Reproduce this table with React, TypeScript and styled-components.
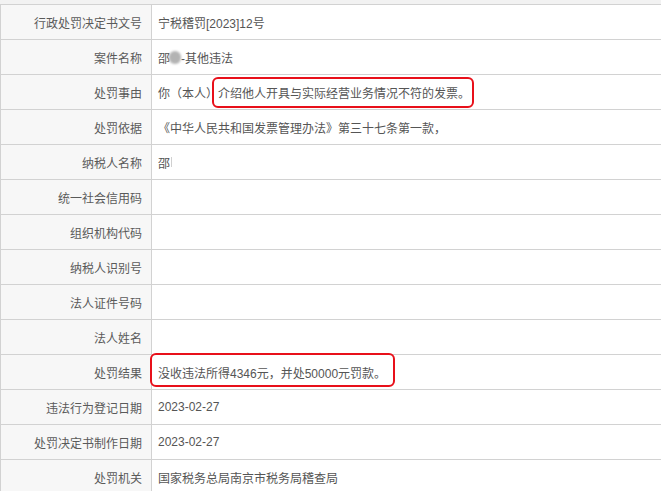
import React from "react";
import styled, { createGlobalStyle } from "styled-components";

const GlobalStyle = createGlobalStyle`
  html, body {
    margin: 0;
    padding: 0;
    background: #f2f2f2;
    overflow: hidden;
  }
  body {
    font-family: "Liberation Sans", "Noto Sans CJK SC", sans-serif;
  }
`;

const Page = styled.div`
  padding-top: 4px;
`;

const Table = styled.div`
  display: grid;
  grid-template-columns: 151px 1fr;
  grid-auto-rows: 35px;
  border-top: 1px solid #d2d2d2;
  border-left: 1px solid #d2d2d2;
  background: #ffffff;
`;

const Label = styled.div`
  display: flex;
  align-items: center;
  justify-content: flex-end;
  padding-right: 9px;
  background: #f7f7f7;
  border-right: 1px solid #d2d2d2;
  border-bottom: 1px solid #d2d2d2;
  font-size: 12px;
  color: #5a5a5a;
  white-space: nowrap;
`;

const Value = styled.div`
  display: flex;
  align-items: center;
  padding-left: 6px;
  background: #ffffff;
  border-bottom: 1px solid #d2d2d2;
  font-size: 12px;
  color: #555555;
  white-space: nowrap;
`;

const Mark = styled.span<{ $l: number; $r: number; $t: number; $b: number }>`
  position: relative;
  &::after {
    content: "";
    position: absolute;
    left: ${(p) => p.$l}px;
    right: ${(p) => p.$r}px;
    top: ${(p) => p.$t}px;
    bottom: ${(p) => p.$b}px;
    border: 2.5px solid #e8101a;
    border-radius: 6px;
    pointer-events: none;
  }
`;

const Blur = styled.span`
  display: inline-block;
  width: 12px;
  height: 13px;
  margin: 0 0 0 -1px;
  border-radius: 6px;
  background: #b3b3b3;
  filter: blur(0.8px);
  vertical-align: -2px;
`;

const Stroke = styled.span`
  display: inline-block;
  width: 1px;
  height: 10px;
  margin-left: 1px;
  background: #d0d0d0;
  vertical-align: -1px;
`;

type Row = { label: string; value: React.ReactNode };

const rows: Row[] = [
  { label: "行政处罚决定书文号", value: "宁税稽罚[2023]12号" },
  {
    label: "案件名称",
    value: (
      <>
        邵<Blur />-其他违法
      </>
    ),
  },
  {
    label: "处罚事由",
    value: (
      <>
        你（本人）
        <Mark $l={-6} $r={-4} $t={-7} $b={-7}>
          介绍他人开具与实际经营业务情况不符的发票。
        </Mark>
      </>
    ),
  },
  { label: "处罚依据", value: "《中华人民共和国发票管理办法》第三十七条第一款，" },
  {
    label: "纳税人名称",
    value: (
      <>
        邵<Stroke />
      </>
    ),
  },
  { label: "统一社会信用码", value: "" },
  { label: "组织机构代码", value: "" },
  { label: "纳税人识别号", value: "" },
  { label: "法人证件号码", value: "" },
  { label: "法人姓名", value: "" },
  {
    label: "处罚结果",
    value: (
      <Mark $l={-8} $r={-9} $t={-11} $b={-6}>
        没收违法所得4346元，并处50000元罚款。
      </Mark>
    ),
  },
  { label: "违法行为登记日期", value: "2023-02-27" },
  { label: "处罚决定书制作日期", value: "2023-02-27" },
  { label: "处罚机关", value: "国家税务总局南京市税务局稽查局" },
];

function App() {
  return (
    <>
      <GlobalStyle />
      <Page>
        <Table>
          {rows.map((row) => (
            <React.Fragment key={row.label}>
              <Label>{row.label}</Label>
              <Value>{row.value}</Value>
            </React.Fragment>
          ))}
        </Table>
      </Page>
    </>
  );
}

export default App;
